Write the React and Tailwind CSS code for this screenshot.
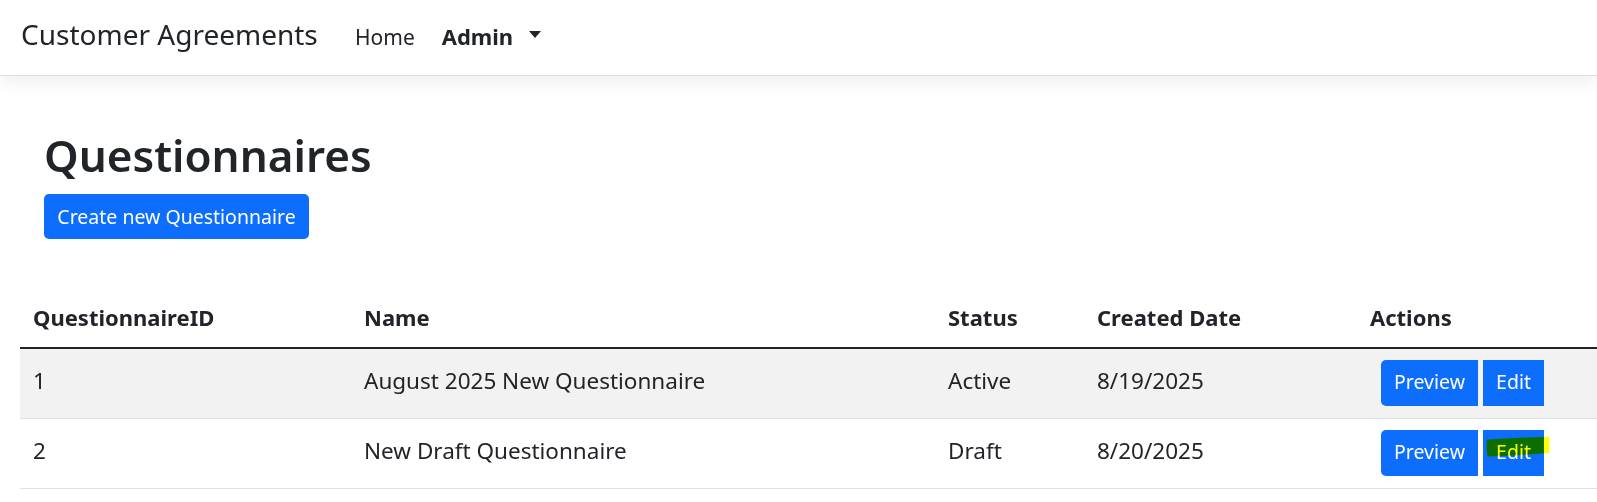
export default function App() {
  const rows = [
    { id: 1, name: "August 2025 New Questionnaire", status: "Active", date: "8/19/2025", striped: true },
    { id: 2, name: "New Draft Questionnaire", status: "Draft", date: "8/20/2025", highlight: true },
  ];
  return (
    <div className="min-h-[502px] bg-white font-['Noto_Sans',sans-serif] text-[#212529]">
      <nav className="relative z-10 flex h-[76px] items-baseline border-b border-[#dee2e6] bg-white pl-[21px] pt-[20px] shadow-[0_8px_16px_rgba(0,0,0,0.06)]">
        <a className="w-[334px] text-[28px] leading-none">Customer Agreements</a>
        <a className="w-[86.7px] text-[21px] leading-none">Home</a>
        <a className="text-[22px] font-bold leading-none">
          Admin
          <span className="ml-[16px] mb-[7px] inline-block border-x-[6.5px] border-t-[7px] border-x-transparent border-t-[#212529]" />
        </a>
      </nav>
      <main className="pl-[20px]">
        <div className="pl-[24px] pt-[57px]">
          <h1 className="text-[44px] font-semibold leading-none">Questionnaires</h1>
          <button className="mt-[17px] flex h-[45px] w-[265px] items-center justify-center rounded-[5px] bg-[#0d6efd] text-[19.5px] leading-none text-white">
            Create new Questionnaire
          </button>
        </div>
        <table className="mt-[55px] w-[1577px] table-fixed border-separate border-spacing-0">
          <colgroup>
            <col className="w-[331px]" />
            <col className="w-[584px]" />
            <col className="w-[149px]" />
            <col className="w-[273px]" />
            <col />
          </colgroup>
          <thead>
            <tr>
              {["QuestionnaireID", "Name", "Status", "Created Date", "Actions"].map((h) => (
                <th
                  key={h}
                  className="border-b-2 border-[#212529] px-[13px] pb-[19px] pt-[12px] text-left text-[22px] font-bold leading-none"
                >
                  {h}
                </th>
              ))}
            </tr>
          </thead>
          <tbody>
            {rows.map((r) => {
              const td =
                "border-b border-[#dee2e6] pb-[12px] pt-[11px] pl-[13px] align-baseline text-[22.5px] leading-[1.2] " +
                (r.striped ? "bg-[#f2f2f2]" : "bg-white");
              return (
                <tr key={r.id}>
                  <td className={td}>{r.id}</td>
                  <td className={td}>{r.name}</td>
                  <td className={td}>{r.status}</td>
                  <td className={td}>{r.date}</td>
                  <td className={td}>
                    <div className="ml-[11px] inline-flex gap-[5px]">
                      <button className="inline-flex h-[46px] w-[97px] items-center justify-center rounded-l-[5px] bg-[#0d6efd] pb-[2px] text-[19.5px] leading-none text-white">
                        Preview
                      </button>
                      <button className="relative inline-flex h-[46px] w-[61px] items-center justify-center bg-[#0d6efd] pb-[2px] text-[19.5px] leading-none text-white">
                        Edit
                        {r.highlight && (
                          <svg
                            className="pointer-events-none absolute left-0 top-0 overflow-visible mix-blend-multiply"
                            width="70"
                            height="30"
                            viewBox="0 0 70 30"
                          >
                            <path
                              d="M4 9.5 C3.3 14 3.4 21 4.6 26.5 L30 25.5 L66.3 23 L66.3 6.7 L40 7.6 Z"
                              fill="#ffff00"
                            />
                          </svg>
                        )}
                      </button>
                    </div>
                  </td>
                </tr>
              );
            })}
          </tbody>
        </table>
      </main>
    </div>
  );
}
